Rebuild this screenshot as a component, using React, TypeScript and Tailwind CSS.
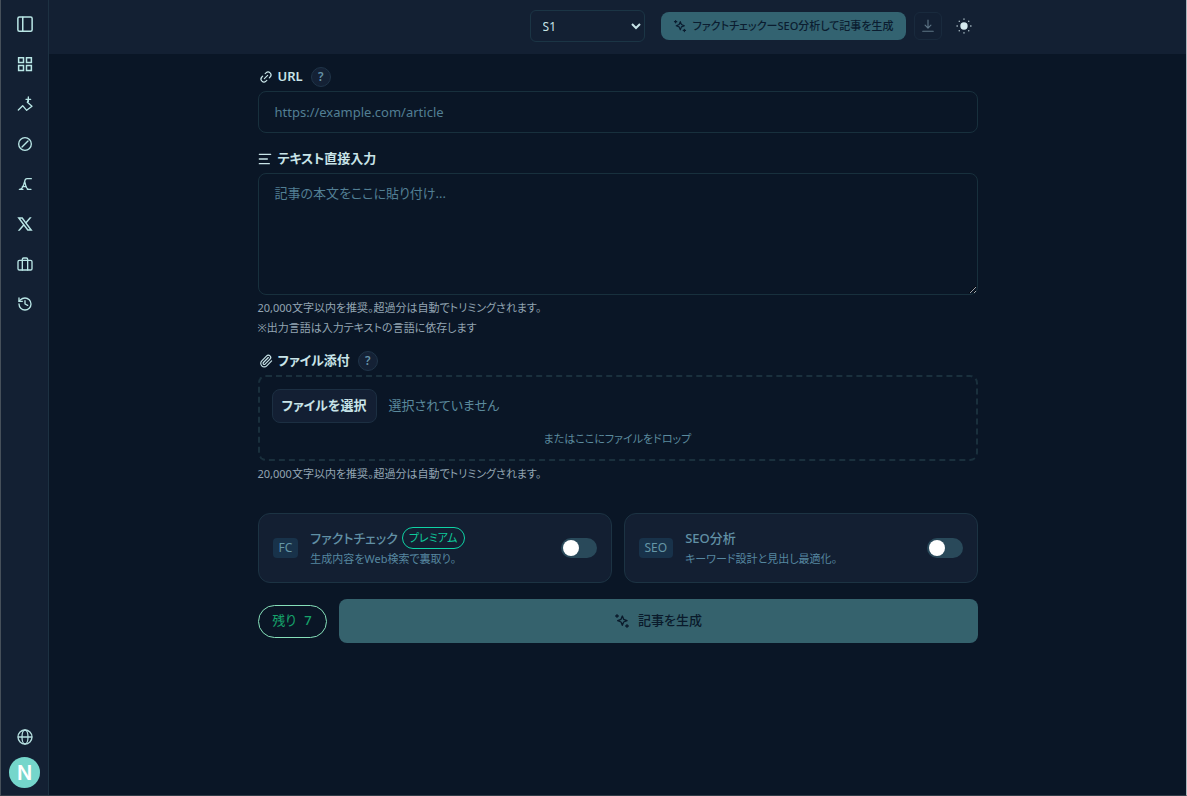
import type { ReactNode } from "react";
import { History, Link2, Paperclip } from "lucide-react";
import { RiTwitterXLine } from "react-icons/ri";

type IconProps = { className?: string };

function Svg({ className, children }: IconProps & { children: ReactNode }) {
  return (
    <svg
      viewBox="0 0 24 24"
      fill="none"
      stroke="currentColor"
      strokeWidth="2"
      strokeLinecap="round"
      strokeLinejoin="round"
      className={className}
      aria-hidden="true"
    >
      {children}
    </svg>
  );
}

const PanelIcon = (props: IconProps) => (
  <Svg {...props}>
    <rect x="2.5" y="2.5" width="19" height="19" rx="2" />
    <path d="M9 3v18" />
  </Svg>
);

const GridIcon = (props: IconProps) => (
  <Svg {...props}>
    <path d="M3.500 3.500h6.500v6.500H3.500zM14 3.500h6.500v6.500H14zM3.500 14h6.500v6.500H3.500zM14 14h6.500v6.500H14z" strokeLinejoin="miter" />
  </Svg>
);

const TrendIcon = (props: IconProps) => (
  <Svg {...props}>
    <path d="M2 21l6.500-6.500 6 7 8-6-7-6 1.500-4" />
    <path d="M17 1.500v7M13.500 5h7" />
  </Svg>
);

const SlashIcon = (props: IconProps) => (
  <Svg {...props}>
    <circle cx="12" cy="12" r="9.5" />
    <path d="M7.500 16.500l9-9" />
  </Svg>
);

const LetterIcon = (props: IconProps) => (
  <Svg {...props}>
    <path d="M21.500 4H15c-2 0-3 1.500-3.500 4L10 13c-1.500 4.500-3 7-6.500 7H9M11.500 8l1.500 6c1 3.500 2.500 6 5 6M15.500 20H21M8 16h6" />
  </Svg>
);

const SuitcaseIcon = (props: IconProps) => (
  <Svg {...props}>
    <rect x="1.500" y="6.500" width="21" height="14.500" rx="2" />
    <path d="M8 21V5a2 2 0 0 1 2-2h4a2 2 0 0 1 2 2v16" />
  </Svg>
);

const GlobeIcon = (props: IconProps) => (
  <Svg {...props}>
    <circle cx="12" cy="12" r="10.500" />
    <ellipse cx="12" cy="12" rx="4.500" ry="10.500" />
    <path d="M2 12h20" />
  </Svg>
);

const SparkIcon = (props: IconProps) => (
  <Svg {...props}>
    <path d="M12.500 4.500l2 5 5 2-5 2-2 5-2-5-5-2 5-2z" />
    <path d="M4.500 2.500v4M2.500 4.500h4M19.500 17.500v4M17.500 19.500h4" />
  </Svg>
);

const DownloadIcon = (props: IconProps) => (
  <Svg {...props}>
    <path d="M12 2v13M7 10.500l5 5 5-5M3 21h18" />
  </Svg>
);

const LinesIcon = (props: IconProps) => (
  <Svg {...props}>
    <path d="M2 5h17M2 12h12M2 19h15" />
  </Svg>
);

const SunIcon = (props: IconProps) => (
  <Svg {...props}>
    <circle cx="12" cy="12" r="4.500" fill="currentColor" />
    <path
      d="M12 1.500v.5M12 22v.5M1.500 12h.5M22 12h.5M4.800 4.800l.2.2M19 19l.2.2M4.800 19.200l.2-.2M19 5l.2-.2"
      opacity="0.8"
    />
  </Svg>
);

const navItems = [
  { label: "サイドバー", icon: <PanelIcon className="size-[18px]" /> },
  { label: "ダッシュボード", icon: <GridIcon className="size-[18px]" /> },
  { label: "トレンド", icon: <TrendIcon className="size-4" /> },
  { label: "チェック", icon: <SlashIcon className="size-4" /> },
  { label: "記事", icon: <LetterIcon className="size-4" /> },
  { label: "X", icon: <RiTwitterXLine className="size-[18px]" /> },
  { label: "ツール", icon: <SuitcaseIcon className="size-4" /> },
  { label: "履歴", icon: <History className="size-4" /> },
];

function HelpButton() {
  return (
    <button
      type="button"
      className="flex size-5 items-center justify-center rounded-full border border-[#1f3448] bg-[#142135] text-xs font-semibold text-[#6593a8]"
    >
      ?
    </button>
  );
}

type FieldLabelProps = {
  htmlFor: string;
  icon: ReactNode;
  help?: boolean;
  children: ReactNode;
};

function FieldLabel({ htmlFor, icon, help, children }: FieldLabelProps) {
  return (
    <div className="flex h-7 items-center gap-2">
      <label
        htmlFor={htmlFor}
        className="flex items-center gap-1 text-[13px] font-semibold text-[#c8e4e8]"
      >
        {icon}
        {children}
      </label>
      {help && <HelpButton />}
    </div>
  );
}

type OptionCardProps = {
  id: string;
  tag: string;
  title: string;
  description: string;
  badge?: string;
};

function OptionCard({ id, tag, title, description, badge }: OptionCardProps) {
  return (
    <label
      htmlFor={id}
      className="flex h-[70px] items-center justify-between rounded-xl border border-[#1c3343] bg-[#131f32] px-3.5"
    >
      <span className="flex items-center gap-3">
        <span className="rounded bg-[#18324a] px-1.5 text-xs leading-5 text-[#6596a6]">
          {tag}
        </span>
        <span className="flex flex-col">
          <span className="flex items-center gap-1 text-[13px] leading-[22px] font-medium text-[#6190a5]">
            {title}
            {badge && (
              <span className="rounded-full border border-[#0fd3a5] px-1.5 text-[11px] leading-5 font-normal text-[#0fc99b]">
                {badge}
              </span>
            )}
          </span>
          <span className="text-[11px] leading-5 text-[#5687a0]">{description}</span>
        </span>
      </span>
      <input
        id={id}
        type="checkbox"
        role="switch"
        className="h-5 w-9 shrink-0 appearance-none rounded-full bg-[#29495a] p-0.5 before:block before:size-4 before:rounded-full before:bg-white checked:before:ml-4"
      />
    </label>
  );
}

export default function App() {
  return (
    <div className="flex min-h-screen border-r border-b border-l border-r-[#a9b4bb] border-b-[#303b46] border-l-[#46505a] bg-[#0a1626] font-['Noto_Sans','Noto_Sans_CJK_JP',sans-serif] text-[#c8e4e8] [font-feature-settings:'palt']">
      <aside className="flex w-12 shrink-0 flex-col items-center border-r border-[#1d3142] bg-[#132033] pt-1 pb-[7px]">
        <nav className="flex flex-col">
          {navItems.map((item) => (
            <a
              key={item.label}
              href="#"
              aria-label={item.label}
              className="flex size-10 items-center justify-center text-[#b9e6e6]"
            >
              {item.icon}
            </a>
          ))}
        </nav>
        <div className="mt-auto flex flex-col items-center">
          <button
            type="button"
            aria-label="言語"
            className="flex size-10 items-center justify-center text-[#b5dedf]"
          >
            <GlobeIcon className="size-4" />
          </button>
          <button
            type="button"
            className="flex size-[31px] items-center justify-center rounded-full bg-[#75d6cb] font-['Inter',sans-serif] text-xl font-semibold text-white"
          >
            N
          </button>
        </div>
      </aside>

      <div className="min-w-0 flex-1">
        <header className="flex h-[54px] justify-center bg-[#132033]">
          <div className="flex w-full max-w-[720px] items-center justify-end gap-2 pb-0.5">
            <select
              aria-label="モデル"
              className="mr-2 h-8 w-[115px] rounded-md border border-[#1b3545] bg-[#132033] px-2 text-xs text-[#c8e4e8]"
            >
              <option>S1</option>
            </select>
            <button
              type="button"
              className="flex h-7 items-center justify-center gap-1.5 rounded-lg bg-[#336371] px-3 text-[11px] font-medium text-[#0b1d30]"
            >
              <SparkIcon className="size-3.5" />
              ファクトチェックーSEO分析して記事を生成
            </button>
            <button
              type="button"
              aria-label="ダウンロード"
              className="flex size-7 items-center justify-center rounded-md border border-[#192a3d] text-[#5d7485]"
            >
              <DownloadIcon className="size-3.5" />
            </button>
            <button
              type="button"
              aria-label="テーマ"
              className="flex size-7 items-center justify-center text-[#d5e9ef]"
            >
              <SunIcon className="size-4" />
            </button>
          </div>
        </header>

        <main className="mx-auto flex max-w-[720px] flex-col pt-[9px]">
          <FieldLabel htmlFor="url" help icon={<Link2 className="size-4 -rotate-45 p-px" />}>
            URL
          </FieldLabel>
          <input
            id="url"
            type="url"
            placeholder="https://example.com/article"
            className="h-[42px] w-full rounded-lg border border-[#18303d] px-4 text-[13px] placeholder:text-[#527f94]"
          />

          <div className="mt-3">
            <FieldLabel htmlFor="body" icon={<LinesIcon className="size-4" />}>
              テキスト直接入力
            </FieldLabel>
          </div>
          <textarea
            id="body"
            placeholder="記事の本文をここに貼り付け..."
            className="block h-[122px] w-full rounded-lg border border-[#18303d] px-4 py-2.5 text-[13px] placeholder:text-[#527f94]"
          />
          <div className="mt-[3px] text-[11px] leading-5 text-[#93a5b3]">
            <p>20,000文字以内を推奨。超過分は自動でトリミングされます。</p>
            <p>※出力言語は入力テキストの言語に依存します</p>
          </div>

          <div className="mt-[9px]">
            <FieldLabel htmlFor="file" help icon={<Paperclip className="size-4 p-px" />}>
              ファイル添付
            </FieldLabel>
          </div>
          <div className="flex h-[86px] flex-col rounded-lg border-2 border-dashed border-[#1a303d] px-3 pt-3">
            <div className="flex items-center gap-3 text-[13px]">
              <button
                id="file"
                type="button"
                className="h-[34px] w-[105px] rounded-lg border border-[#1c2f42] bg-[#131f33] font-semibold text-[#c8e4e8]"
              >
                ファイルを選択
              </button>
              <span className="text-[#5b8a9d]">選択されていません</span>
            </div>
            <p className="mt-1.5 text-center text-[11px] leading-5 text-[#5b8a9d]">
              またはここにファイルをドロップ
            </p>
          </div>
          <p className="mt-[3px] text-[11px] leading-5 text-[#93a5b3]">
            20,000文字以内を推奨。超過分は自動でトリミングされます。
          </p>

          <div className="mt-[29px] grid grid-cols-2 gap-3">
            <OptionCard
              id="fact-check"
              tag="FC"
              title="ファクトチェック"
              badge="プレミアム"
              description="生成内容をWeb検索で裏取り。"
            />
            <OptionCard
              id="seo"
              tag="SEO"
              title="SEO分析"
              description="キーワード設計と見出し最適化。"
            />
          </div>

          <div className="mt-4 flex items-center gap-3">
            <span className="flex h-[33px] w-[69px] shrink-0 items-center justify-center gap-2 rounded-full border border-[#86e0ba] text-[13px] text-[#16a36b]">
              残り <span className="font-medium">7</span>
            </span>
            <button
              type="button"
              className="flex h-11 flex-1 items-center justify-center gap-2 rounded-lg bg-[#35626d] text-[13px] font-medium text-[#0a1a2b]"
            >
              <SparkIcon className="size-4" />
              記事を生成
            </button>
          </div>
        </main>
      </div>
    </div>
  );
}
